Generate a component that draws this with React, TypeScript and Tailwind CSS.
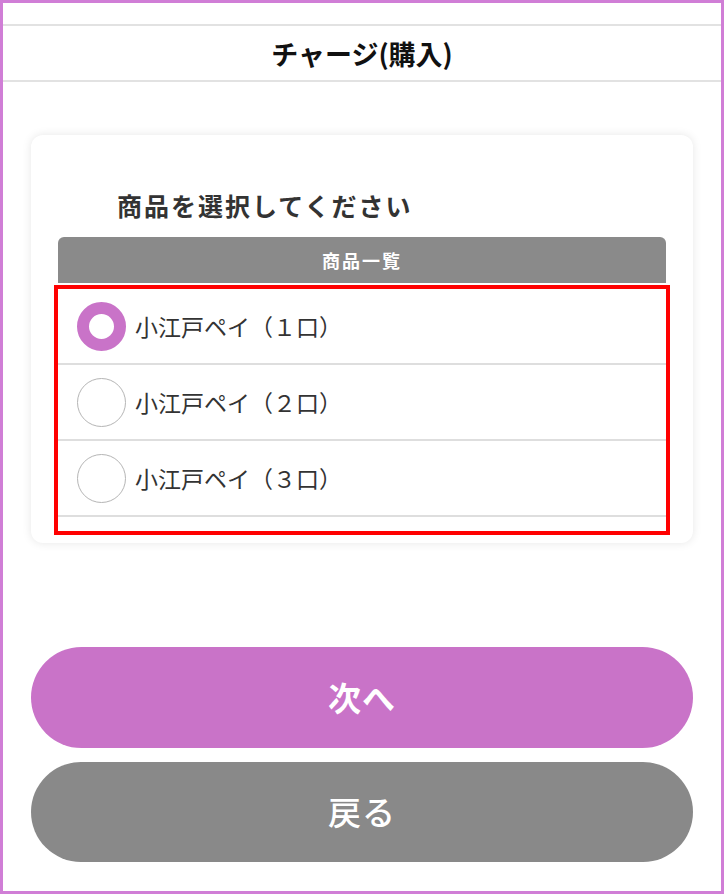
const items = ["小江戸ペイ（１口）", "小江戸ペイ（２口）", "小江戸ペイ（３口）"]

const App: React.FC = (): JSX.Element => {
  const selected = 0

  return (
    <div
      className="w-[724px] h-[894px] border-[3px] border-[#d07ed6] bg-white flex flex-col overflow-hidden"
      style={{ fontFamily: '"Noto Sans CJK JP", "Noto Sans", sans-serif' }}
    >
      {/* top bar */}
      <div className="h-[23px] border-b-2 border-[#e2e2e2]" />
      <div className="h-[56px] border-b-2 border-[#e2e2e2] flex items-center justify-center">
        <h1 className="text-[27px] font-bold text-[#111] leading-none">チャージ(購入)</h1>
      </div>

      {/* card */}
      <div className="mx-[28px] mt-[53px] h-[408px] rounded-[12px] bg-white shadow-[0_0_10px_rgba(0,0,0,0.10)] px-[27px] pt-[50px]">
        <p className="pl-[59px] text-[25px] font-bold text-[#333] leading-[40px] tracking-[2px]">
          商品を選択してください
        </p>
        <div className="mt-[12px] h-[46px] rounded-t-[6px] bg-[#8a8a8a] flex items-center justify-center">
          <span className="text-[18px] font-bold text-white tracking-[2px]">商品一覧</span>
        </div>
        <div className="-mx-[4px] mt-[2px] border-4 border-[#ff0000] pb-[14px]">
          {items.map((label, i) => (
            <label
              key={label}
              className="h-[76px] flex items-center gap-[9px] pl-[19px] border-b-2 border-[#dedede] cursor-pointer"
            >
              {i === selected ? (
                <span className="w-[49px] h-[49px] rounded-full border-[12px] border-[#c973c8] bg-white shrink-0" />
              ) : (
                <span className="w-[49px] h-[49px] rounded-full border border-[#b5b5b5] bg-white shrink-0" />
              )}
              <span className="text-[23px] text-[#333]">{label}</span>
            </label>
          ))}
        </div>
      </div>

      {/* buttons */}
      <div className="mx-[28px] mt-[104px] flex flex-col gap-[14px]">
        <button className="h-[101px] rounded-full bg-[#c973c8] text-white text-[33px] font-bold tracking-[1px]">
          次へ
        </button>
        <button className="h-[100px] rounded-full bg-[#898989] text-white text-[33px] font-medium tracking-[1px]">
          戻る
        </button>
      </div>
    </div>
  )
}

export default App
